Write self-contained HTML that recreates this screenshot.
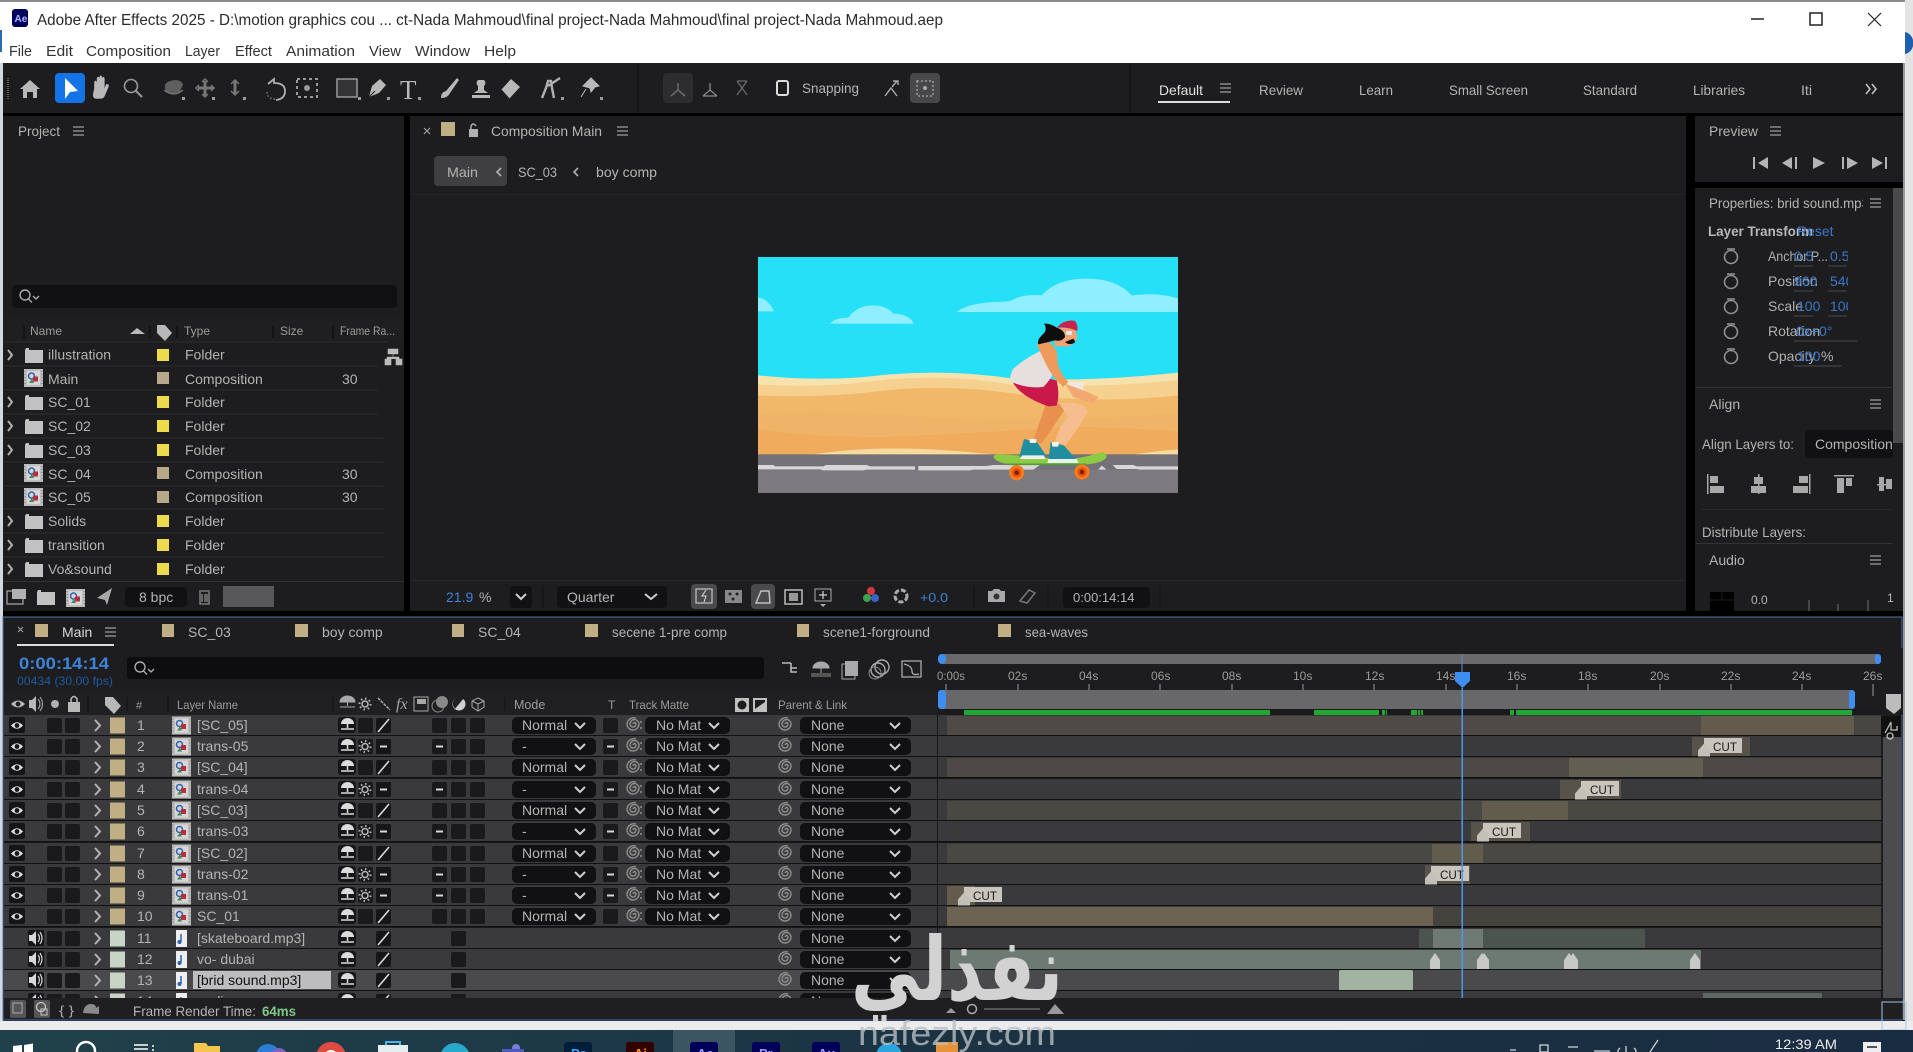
<!DOCTYPE html>
<html><head><meta charset="utf-8"><title>Adobe After Effects 2025</title>
<style>
html,body{margin:0;padding:0;background:#000;width:1913px;height:1052px;overflow:hidden}
svg{display:block}
text{font-family:"Liberation Sans","DejaVu Sans",sans-serif;font-size:14px;fill:#b4b4b4}
.t{font-size:16px;fill:#2a2a2a}
.m{font-size:15px;fill:#333}
.w{font-size:14px;fill:#a8a8a8}
.h{font-size:12px;fill:#9c9c9c}
.b{fill:#3b84d8}
.c{font-size:12px;fill:#1c1c1c;text-anchor:middle}
.g{fill:none;stroke:#b0b0b0;stroke-width:2}
.tk{stroke:#9a9a9a;stroke-width:1}
</style></head><body>
<svg width="1913" height="1052" viewBox="0 0 1913 1052" xmlns="http://www.w3.org/2000/svg">
<defs>
<clipPath id="clipRows"><rect x="0" y="691" width="1913" height="307"/></clipPath>
<clipPath id="clipScene"><rect x="54" y="50" width="1260" height="708"/></clipPath>
<clipPath id="clipTask"><rect x="0" y="1030" width="1913" height="22"/></clipPath>
<clipPath id="clipProp"><rect x="1700" y="190" width="163" height="30"/></clipPath>
<clipPath id="clipComp"><rect x="1805" y="430" width="88" height="30"/></clipPath>
<clipPath id="clipVal"><rect x="1790" y="245" width="58" height="80"/></clipPath>
<g id="ham"><path d="M0 0h11M0 4h11M0 8h11" stroke="#a0a0a0" stroke-width="1.3" fill="none"/></g>
<g id="ci"><rect width="19" height="18" fill="#bdbdbd"/><rect x="3" y="2" width="13" height="14" fill="#d6d6d6"/><circle cx="7.500" cy="7" r="3" fill="none" stroke="#2b62b5" stroke-width="1.500"/><rect x="9" y="7.500" width="5" height="5" fill="#b5303c"/><path d="M5 14l3-4 2 4z" fill="#3a8a5a"/><path d="M1 2v14M18 2v14" stroke="#777" stroke-dasharray="1 2"/></g>
<g id="fold"><path d="M0 3h4v-2h-3zM0 3h18v13h-18z" fill="#c2c2c2"/></g>
<g id="eye"><rect x="9" y="2" width="16" height="16" rx="2" fill="#151517"/><path d="M11 10.500q6-6.500 12 0q-6 6.500-12 0z" fill="#e4e4e4"/><circle cx="17" cy="10.500" r="2.400" fill="#151517"/></g>
<g id="spk"><rect x="28" y="2" width="16" height="16" rx="2" fill="#151517"/><path d="M29 7h3l4-4v14l-4-4h-3z" fill="#d8d8d8"/><path d="M38 6q3 4 0 8M40 4q4 6 0 12" stroke="#d0d0d0" stroke-width="1.200" fill="none"/></g>
<g id="shy"><rect x="338" y="2" width="18" height="16" rx="3" fill="#161618"/><path d="M341 9a6.500 6 0 0 1 13 0z" fill="#dcdcdc"/><path d="M347.500 9v4M341 14h13" stroke="#dcdcdc" stroke-width="1.500"/></g>
<g id="slash"><rect x="376" y="3" width="15" height="15" rx="2" fill="#161618"/><path d="M378 17l11-13" stroke="#d8d8d8" stroke-width="1.600"/></g>
<g id="spir"><path d="M0 -1a1.500 1.500 0 0 1 3 0a3 3 0 0 1-6 0a4.500 4.500 0 0 1 9 0a6 6 0 0 1-12 0a7 7 0 0 1 9-6" fill="none" stroke="#8e8e8e" stroke-width="1.400"/></g>
<g id="gear"><circle r="3" fill="none" stroke="#b8b8b8" stroke-width="1.500"/><circle r="5.500" fill="none" stroke="#b8b8b8" stroke-width="2" stroke-dasharray="1.500 2.800"/></g>
<g id="rowbase"><rect x="4" y="0" width="1877" height="21" fill="#3a3a3c"/><rect x="4" y="20" width="1877" height="1.400" fill="#111"/>
<rect x="47" y="3" width="15" height="15" rx="2" fill="#1a1a1c"/><rect x="65" y="3" width="15" height="15" rx="2" fill="#1a1a1c"/>
<path d="M95 5l5 5.500-5 5.500" fill="none" stroke="#b4b4b4" stroke-width="2"/>
<use href="#shy"/><use href="#slash"/>
<g transform="translate(785,10)"><use href="#spir"/></g>
<rect x="800" y="2" width="111" height="17" rx="5" fill="#111113"/><path d="M890 8l5 5 5-5" fill="none" stroke="#d0d0d0" stroke-width="2"/></g>
<g id="vis"><use href="#rowbase"/><use href="#eye"/><rect x="110" y="2.500" width="15" height="16" fill="#c0ae84"/><use href="#ci" x="172" y="1.500"/>
<rect x="432" y="3" width="15" height="15" rx="2" fill="#1a1a1c"/><rect x="451" y="3" width="15" height="15" rx="2" fill="#1a1a1c"/><rect x="470" y="3" width="15" height="15" rx="2" fill="#1a1a1c"/>
<rect x="512" y="2" width="84" height="17" rx="5" fill="#111113"/><path d="M575 8l5 5 5-5" fill="none" stroke="#d0d0d0" stroke-width="2"/>
<rect x="603" y="3" width="15" height="15" rx="2" fill="#1a1a1c"/>
<g transform="translate(633,10)"><use href="#spir"/></g><circle cx="641" cy="7" r="1" fill="#8e8e8e"/><circle cx="641" cy="13" r="1" fill="#8e8e8e"/>
<rect x="645" y="2" width="85" height="17" rx="5" fill="#111113"/><path d="M709 8l5 5 5-5" fill="none" stroke="#d0d0d0" stroke-width="2"/></g>
<g id="A"><use href="#vis"/><rect x="358" y="3" width="15" height="15" rx="2" fill="#1a1a1c"/></g>
<g id="B"><use href="#vis"/>
<rect x="358" y="3" width="15" height="15" rx="2" fill="#1a1a1c"/><g transform="translate(365,10.500)"><use href="#gear"/></g>
<rect x="376" y="3" width="15" height="15" rx="2" fill="#161618"/><path d="M380 10.500h7M436 10.500h7M607 10.500h7" stroke="#d8d8d8" stroke-width="2"/></g>
<g id="C"><use href="#rowbase"/><use href="#spk"/><rect x="110" y="2.500" width="15" height="16" fill="#c8d5c6"/><rect x="176" y="2" width="11" height="17" fill="#eee"/><path d="M181 6v8" stroke="#2b62b5" stroke-width="1.500"/><circle cx="179.500" cy="14" r="2" fill="#2b62b5"/>
<rect x="451" y="3" width="15" height="15" rx="2" fill="#1a1a1c"/></g>
<g id="cut"><rect x="0" y="2" width="38" height="15" fill="#c9c5bd"/><path d="M-6 20.500v-6l6-7 6 7v6z" fill="#c4c0b8"/><text class="c" x="21" y="15" textLength="24" lengthAdjust="spacingAndGlyphs">CUT</text></g>
<g id="mk"><path d="M-5 19v-9l5-7 5 7v9z" fill="#c8c8c8"/></g>
</defs>

<!-- window backdrop -->
<rect width="1913" height="1052" fill="#000"/>
<rect x="0" y="0" width="1905" height="63" fill="#fff"/>
<rect x="0" y="0" width="1905" height="2" fill="#8c8c8c"/>
<rect x="1905" y="0" width="8" height="1030" fill="#e4e4e4"/>
<path d="M1905 32a10 11 0 0 1 8 8v6a10 11 0 0 1-8 8z" fill="#1f5fae"/>
<rect x="0" y="63" width="3" height="967" fill="#d4d9df"/>
<path d="M0 30h2v22h-2z" fill="#2c6cb0"/>
<rect x="1903" y="63" width="2" height="957" fill="#9a9a9a"/>

<!-- title -->
<rect x="12" y="9" width="16" height="18" rx="3" fill="#00005b"/>
<text x="14.500" y="22" style="font-size:10px;fill:#b5b5ff;font-weight:bold">Ae</text>
<text class="t" x="37" y="25" textLength="906" lengthAdjust="spacingAndGlyphs">Adobe After Effects 2025 - D:\motion graphics cou ... ct-Nada Mahmoud\final project-Nada Mahmoud\final project-Nada Mahmoud.aep</text>
<path d="M1751 19h13" stroke="#222" stroke-width="1.500"/>
<rect x="1810" y="13" width="12" height="12" fill="none" stroke="#222" stroke-width="1.500"/>
<path d="M1868 13l13 13M1881 13l-13 13" stroke="#222" stroke-width="1.200"/>
<text class="m" x="9" y="56" textLength="23" lengthAdjust="spacingAndGlyphs">File</text>
<text class="m" x="46" y="56" textLength="27" lengthAdjust="spacingAndGlyphs">Edit</text>
<text class="m" x="86" y="56" textLength="85" lengthAdjust="spacingAndGlyphs">Composition</text>
<text class="m" x="185" y="56" textLength="35" lengthAdjust="spacingAndGlyphs">Layer</text>
<text class="m" x="235" y="56" textLength="37" lengthAdjust="spacingAndGlyphs">Effect</text>
<text class="m" x="286" y="56" textLength="69" lengthAdjust="spacingAndGlyphs">Animation</text>
<text class="m" x="369" y="56" textLength="32" lengthAdjust="spacingAndGlyphs">View</text>
<text class="m" x="415" y="56" textLength="55" lengthAdjust="spacingAndGlyphs">Window</text>
<text class="m" x="484" y="56" textLength="32" lengthAdjust="spacingAndGlyphs">Help</text>

<!-- toolbar -->
<rect x="3" y="63" width="1900" height="50" fill="#1d1d1f"/>
<path d="M638 64v49M1130 64v49" stroke="#101010"/>
<path d="M8 78v22" stroke="#5a5a5a" stroke-width="2" stroke-dasharray="1 1"/>
<path d="M20 89l10-9 10 9h-3v9h-4v-6h-6v6h-4v-9z" fill="#b8b8b8"/>
<rect x="55" y="73" width="30" height="30" rx="4" fill="#1473e6"/>
<path d="M65 78l13 13-8 1-5 7z" fill="#fff"/>
<path d="M94 88v-5q1-2 2 0v3v-6q1-2 2 0v5v-6q1-2 2 0v6v-5q1-2 2 0v8l1-3q3-1 2 2l-3 7q-1 2-4 2h-2q-3 0-3-3z" fill="#b8b8b8" transform="translate(-28,-26) scale(1.300)"/>
<circle cx="131" cy="86" r="6.500" fill="none" stroke="#999" stroke-width="1.600"/><path d="M136 91l6 6" stroke="#999" stroke-width="2"/>
<path d="M165 88q-1-5 5-7l5-1q7 0 8 5l-2 4q-1 5-8 5q-7 0-8-6z" fill="#5f5f5f"/><path d="M164 90q10 8 19 0" fill="none" stroke="#777" stroke-width="1.300"/>
<path d="M198 88h15M205 81v15" stroke="#777" stroke-width="3"/><path d="M202 82l3-3 3 3M202 94l3 3 3-3M199 85l-3 3 3 3M211 85l3 3-3 3" fill="none" stroke="#777" stroke-width="1.500"/>
<path d="M235 80v14" stroke="#777" stroke-width="3"/><path d="M231 84l4-4 4 4M231 91l4 4 4-4" fill="none" stroke="#777" stroke-width="1.500"/>
<path d="M268 84l6-5v4q11 0 11 8t-9 9" fill="none" stroke="#b0b0b0" stroke-width="1.800"/><path d="M275 99q-8 0-8-8" fill="none" stroke="#777" stroke-width="1.500" stroke-dasharray="1.500 2"/>
<rect x="297" y="79" width="20" height="18" fill="none" stroke="#9a9a9a" stroke-width="2" stroke-dasharray="3 3"/><circle cx="307" cy="88" r="3" fill="#9a9a9a"/>
<rect x="337" y="79" width="20" height="18" fill="#333336" stroke="#9a9a9a" stroke-width="1.500"/>
<path d="M369 97l3-11 8-7 6 6-7 8z" fill="#b8b8b8"/><path d="M369 97l6-6" stroke="#1d1d1f"/>
<text x="400" y="99" style="font-family:'Liberation Serif',serif;font-size:27px;fill:#b8b8b8">T</text>
<path d="M441 98q0-6 5-7l11-13 2 2-9 13q-2 5-9 5z" fill="#b8b8b8"/>
<path d="M472 98h18v-3h-18zM474 93h14l-4-3v-4q3-3 0-6h-6q-3 3 0 6v4z" fill="#b8b8b8"/>
<path d="M501 90l10-11 9 8-11 12z" fill="#b8b8b8"/><path d="M501 90l8 9" stroke="#1d1d1f" stroke-width="1.500"/>
<path d="M542 98l4-10 2-7 3 0 1 7 2 10M548 86l12-8" fill="none" stroke="#b0b0b0" stroke-width="2.400"/>
<path d="M583 86l8-8 8 8-4 1-4 5-1-4zM586 89l-5 8" fill="#b8b8b8" stroke="#b8b8b8"/>
<g fill="#9a9a9a"><path d="M182 97h3v3h-3zM212 97h3v3h-3zM243 97h3v3h-3zM358 97h3v3h-3zM387 97h3v3h-3zM418 97h3v3h-3zM561 97h3v3h-3zM600 97h3v3h-3z"/></g>
<rect x="663" y="73" width="30" height="30" rx="4" fill="#2d2d2f"/>
<path d="M678 83v7l-7 6M678 90l7 6" fill="none" stroke="#6a6a6a" stroke-width="1.500"/>
<path d="M710 83v7l-7 6M710 90l7 6M703 96h14" fill="none" stroke="#8a8a8a" stroke-width="1.300"/>
<path d="M737 81l10 14M747 81l-10 14M737 81h10" fill="none" stroke="#6a6a6a" stroke-width="1.300"/>
<rect x="777" y="81" width="11" height="14" rx="2" fill="none" stroke="#dcdcdc" stroke-width="2"/>
<text x="802" y="93" textLength="57" lengthAdjust="spacingAndGlyphs">Snapping</text>
<path d="M885 96l6-8 6 8M892 87l5-6M893 81h5v4" fill="none" stroke="#aaa" stroke-width="1.400"/>
<rect x="910" y="73" width="30" height="30" rx="4" fill="#48484a"/>
<rect x="917" y="81" width="16" height="15" fill="none" stroke="#aaa" stroke-width="1.300" stroke-dasharray="2 2"/><circle cx="925" cy="88" r="2" fill="#aaa"/>
<text x="1159" y="95" textLength="44" lengthAdjust="spacingAndGlyphs" style="fill:#e0e0e0">Default</text>
<use href="#ham" x="1220" y="84"/><rect x="1158" y="101" width="72" height="2" fill="#dcdcdc"/>
<text x="1259" y="95" textLength="44" lengthAdjust="spacingAndGlyphs">Review</text>
<text x="1359" y="95" textLength="34" lengthAdjust="spacingAndGlyphs">Learn</text>
<text x="1449" y="95" textLength="79" lengthAdjust="spacingAndGlyphs">Small Screen</text>
<text x="1583" y="95" textLength="54" lengthAdjust="spacingAndGlyphs">Standard</text>
<text x="1693" y="95" textLength="52" lengthAdjust="spacingAndGlyphs">Libraries</text>
<text x="1801" y="95" textLength="11" lengthAdjust="spacingAndGlyphs">Iti</text>
<path d="M1866 84l4 5-4 5M1872 84l4 5-4 5" fill="none" stroke="#c0c0c0" stroke-width="1.600"/>

<!-- project panel -->
<rect x="3" y="116" width="401" height="495" fill="#1d1d1f"/>
<text x="18" y="136" textLength="42" lengthAdjust="spacingAndGlyphs">Project</text><use href="#ham" x="73" y="127"/>
<rect x="12" y="285" width="385" height="23" rx="4" fill="#111113"/>
<circle cx="25" cy="295" r="5" fill="none" stroke="#aaa" stroke-width="1.400"/><path d="M28.500 299l3.500 3.500M33 296l3 3 3-3" fill="none" stroke="#aaa" stroke-width="1.400"/>
<rect x="3" y="318" width="401" height="24" fill="#1f1f21"/>
<text class="h" x="30" y="335">Name</text><path d="M130 334l7-6 8 6z" fill="#b8b8b8"/>
<path d="M157 325h8l7 8-7 8-8-8z" fill="#b8b8b8"/>
<text class="h" x="184" y="335">Type</text><text class="h" x="280" y="335">Size</text><text class="h" x="340" y="335" textLength="55" lengthAdjust="spacingAndGlyphs">Frame Ra...</text>
<path d="M24 326v12M150 326v12M177 326v12M273 326v12M333 326v12" stroke="#111" stroke-width="1.500"/>
<path d="M388 349h10v5h-10zM385 359h6v6h-6zM396 359h6v6h-6zM393 354v3M387 359v-2h12v2" fill="#bbb" stroke="#bbb" stroke-width=".6"/>
<g id="proj">
<g><path d="M8 350l4 5-4 5" class="g"/><use href="#fold" x="25" y="347"/><rect x="157" y="349" width="12" height="12" fill="#ecdc4c"/><text x="48" y="359.500">illustration</text><text x="185" y="359.500">Folder</text></g>
<g><use href="#ci" x="24" y="369"/><rect x="157" y="372" width="12" height="12" fill="#b8a88a"/><text x="48" y="384">Main</text><text x="185" y="384">Composition</text><text x="342" y="384">30</text></g>
<g><path d="M8 397l4 5-4 5" class="g"/><use href="#fold" x="25" y="394"/><rect x="157" y="396" width="12" height="12" fill="#ecdc4c"/><text x="48" y="407">SC_01</text><text x="185" y="407">Folder</text></g>
<g><path d="M8 421l4 5-4 5" class="g"/><use href="#fold" x="25" y="418"/><rect x="157" y="420" width="12" height="12" fill="#ecdc4c"/><text x="48" y="431">SC_02</text><text x="185" y="431">Folder</text></g>
<g><path d="M8 445l4 5-4 5" class="g"/><use href="#fold" x="25" y="442"/><rect x="157" y="444" width="12" height="12" fill="#ecdc4c"/><text x="48" y="455">SC_03</text><text x="185" y="455">Folder</text></g>
<g><use href="#ci" x="24" y="464"/><rect x="157" y="467" width="12" height="12" fill="#b8a88a"/><text x="48" y="479">SC_04</text><text x="185" y="479">Composition</text><text x="342" y="479">30</text></g>
<g><use href="#ci" x="24" y="488"/><rect x="157" y="491" width="12" height="12" fill="#b8a88a"/><text x="48" y="502">SC_05</text><text x="185" y="502">Composition</text><text x="342" y="502">30</text></g>
<g><path d="M8 516l4 5-4 5" class="g"/><use href="#fold" x="25" y="513"/><rect x="157" y="515" width="12" height="12" fill="#ecdc4c"/><text x="48" y="526">Solids</text><text x="185" y="526">Folder</text></g>
<g><path d="M8 540l4 5-4 5" class="g"/><use href="#fold" x="25" y="537"/><rect x="157" y="539" width="12" height="12" fill="#ecdc4c"/><text x="48" y="550">transition</text><text x="185" y="550">Folder</text></g>
<g><path d="M8 564l4 5-4 5" class="g"/><use href="#fold" x="25" y="561"/><rect x="157" y="563" width="12" height="12" fill="#ecdc4c"/><text x="48" y="574">Vo&amp;sound</text><text x="185" y="574">Folder</text></g>
</g>
<path d="M3 342h385M3 366h375M3 390h375M3 414h375M3 438h380M3 462h380M3 486h380M3 509h380M3 533h380M3 557h380" stroke="#2d2d2f"/>
<rect x="3" y="581" width="401" height="1" fill="#333"/>
<rect x="7" y="591" width="16" height="13" fill="none" stroke="#aaa" stroke-width="1.200"/><rect x="12" y="589" width="14" height="10" fill="#b0b0b0"/>
<use href="#fold" x="37" y="589"/><use href="#ci" x="66" y="589"/>
<path d="M97 598l15-10-5 17-2-5z" fill="#a8a8a8"/>
<rect x="125" y="587" width="62" height="20" rx="4" fill="#111113"/><text x="139" y="602">8 bpc</text>
<path d="M199 591h11M200 592v12h9v-12M202 594v8M205 594v8M207 594v8" fill="none" stroke="#8a8a8a" stroke-width="1.300"/>
<rect x="223" y="586" width="51" height="21" fill="#58585a"/>

<!-- composition panel -->
<rect x="410" y="116" width="1276" height="495" fill="#1d1d1f"/>
<path d="M424 128l6 6M430 128l-6 6" stroke="#a0a0a0" stroke-width="1.200"/>
<rect x="441" y="122" width="14" height="14" fill="#c0ae84"/>
<rect x="469" y="129" width="9" height="8" fill="#b0b0b0"/><path d="M471 129v-3q2-4 5 0" fill="none" stroke="#b0b0b0" stroke-width="1.400"/>
<text x="491" y="136" textLength="111" lengthAdjust="spacingAndGlyphs">Composition Main</text><use href="#ham" x="617" y="127"/>
<rect x="434" y="156" width="73" height="30" rx="4" fill="#3f3f41"/>
<text x="447" y="177" textLength="31" lengthAdjust="spacingAndGlyphs">Main</text>
<path d="M501 168l-4 4 4 4M578 168l-4 4 4 4" fill="none" stroke="#b0b0b0" stroke-width="1.600"/>
<text x="518" y="177" textLength="39" lengthAdjust="spacingAndGlyphs">SC_03</text>
<text x="596" y="177" textLength="61" lengthAdjust="spacingAndGlyphs">boy comp</text>
<rect x="410" y="194" width="1276" height="1" fill="#262628"/>

<!-- scene -->
<svg x="758" y="257" width="420" height="236" viewBox="54 50 1260 708">
<g clip-path="url(#clipScene)">
<rect x="54" y="50" width="1260" height="708" fill="#26e0f8"/>
<path d="M650 215Q680 190 760 185Q800 185 815 180Q850 160 905 165Q950 115 1040 115Q1130 115 1175 165Q1260 155 1314 175V215Z" fill="#8feeff"/>
<path d="M270 250Q285 232 325 232Q350 195 400 195Q440 195 460 220Q505 220 522 250Z" fill="#8feeff"/>
<path d="M54 172Q85 175 102 213H54Z" fill="#8feeff"/>
<path d="M54 405Q250 425 420 405Q620 385 820 415Q1050 425 1314 397V650H54Z" fill="#f7e2ad"/>
<path d="M54 432Q240 445 420 420Q620 400 810 432Q1050 445 1314 420V650H54Z" fill="#f5d08e"/>
<path d="M54 465Q240 475 440 450Q640 430 860 465Q1100 490 1314 465V650H54Z" fill="#f1b86a"/>
<path d="M54 520Q300 505 560 530Q800 550 1314 520V650H54Z" fill="#f0b468"/>
<path d="M54 565Q200 590 440 590Q760 575 1000 560Q1160 560 1314 575V650H54Z" fill="#f0ab5c"/>
<path d="M210 644Q440 605 770 644ZM1170 644Q1260 630 1314 628V644Z" fill="#f8d99e"/>
<rect x="54" y="642" width="1260" height="116" fill="#747278"/>
<rect x="54" y="688" width="1260" height="70" fill="#7c797f"/>
<path d="M54 674H100L105 678H250L258 674H380L390 678H525V688H380L370 690H250L240 687H54ZM535 677H740L760 674H900L880 688H700L690 690H535ZM1085 676L1100 688H1075ZM1118 674H1180L1190 678H1314V688H1200L1190 686H1130Z" fill="#d8d6d6"/>
<path d="M760 650Q760 640 790 642L950 654Q1010 660 1070 640Q1100 630 1100 650Q1090 668 1040 672L820 672Q770 670 760 650Z" fill="#8ecb45"/>
<path d="M800 672H1040" stroke="#4f9a3a" stroke-width="5"/>
<circle cx="830" cy="697" r="23" fill="#f47b20"/><circle cx="830" cy="697" r="14" fill="#e5540f"/><circle cx="830" cy="697" r="7" fill="#8a1d10"/>
<circle cx="1026" cy="695" r="23" fill="#f47b20"/><circle cx="1026" cy="695" r="14" fill="#e5540f"/><circle cx="1026" cy="695" r="7" fill="#8a1d10"/>
<path d="M918 490L880 600L905 610L985 492Z" fill="#e8914f"/>
<path d="M958 490Q1040 480 1042 515Q1020 560 975 615L945 605Q960 550 985 530Z" fill="#f6bd8f"/>
<path d="M852 596L892 606L918 645L850 655L838 648Z" fill="#1f8f9f"/><path d="M846 645H912L916 656H840Z" fill="#e8f0f0"/>
<path d="M932 605L972 616L1012 660L925 662Z" fill="#1f8f9f"/><path d="M925 656H1010L1016 668H922Z" fill="#e8f0f0"/>
<path d="M868 596h22l-2 12h-18zM935 605h22l-2 14h-18z" fill="#f4f4f4"/>
<path d="M812 412Q830 465 925 498L950 496Q960 465 950 420L905 410Z" fill="#c9184a"/>
<path d="M905 330Q860 350 820 385Q805 410 815 425Q860 445 910 440Q950 400 952 350Z" fill="#e6dfdc"/>
<path d="M890 310Q905 300 925 305Q950 320 952 345Q950 390 985 425L970 440Q935 410 915 365Q900 335 890 310Z" fill="#ee9a5c"/>
<path d="M985 425L1030 425L1030 450L985 445Z" fill="#efe7e2"/>
<path d="M975 430L1030 450L1075 470L1060 490L1000 470Z" fill="#f3a872"/>
<path d="M950 280Q940 300 945 318L985 318Q1005 312 1012 290L1005 265L960 262Z" fill="#f0a272"/>
<path d="M912 250Q930 248 950 262Q975 270 975 290Q965 305 945 300Q925 305 895 312Q890 300 905 285Q925 270 912 250Z" fill="#0e0e0e"/>
<path d="M950 262Q975 235 1005 242Q1015 255 1012 272Q980 258 950 262Z" fill="#c8234f"/>
<rect x="978" y="272" width="18" height="12" rx="3" fill="#e8e8f0"/><path d="M975 305Q990 318 1006 305L1000 295Z" fill="#0e0e0e"/>
</g></svg>

<!-- comp bottom bar -->
<rect x="410" y="580" width="1276" height="1" fill="#2a2a2c"/>
<text class="b" x="446" y="602">21.9</text><text x="479" y="602">%</text>
<rect x="510" y="586" width="22" height="22" rx="3" fill="#111113"/><path d="M516 594l5 5 5-5" fill="none" stroke="#d0d0d0" stroke-width="2"/>
<path d="M543 586v22" stroke="#111"/>
<rect x="557" y="586" width="110" height="22" rx="4" fill="#111113"/><text x="567" y="602">Quarter</text><path d="M645 594l6 5 6-5" fill="none" stroke="#d0d0d0" stroke-width="2"/>
<rect x="691" y="584" width="26" height="25" rx="4" fill="#4a4a4c"/><rect x="696" y="589" width="16" height="14" fill="none" stroke="#bbb" stroke-width="1.300"/><path d="M706 590l-4 6h4l-2 6" fill="none" stroke="#ddd"/>
<rect x="725" y="590" width="17" height="13" fill="#888"/><g fill="#222"><circle cx="730" cy="594" r="1.500"/><circle cx="737" cy="594" r="1.500"/><circle cx="733" cy="599" r="1.500"/></g>
<rect x="751" y="584" width="24" height="25" rx="4" fill="#4a4a4c"/><path d="M756 603h14l-1-12h-8z" fill="none" stroke="#c0c0c0" stroke-width="1.500"/>
<rect x="785" y="590" width="17" height="14" fill="none" stroke="#bbb" stroke-width="1.500"/><rect x="789" y="593" width="9" height="8" fill="#999"/>
<rect x="815" y="589" width="16" height="12" fill="none" stroke="#aaa"/><path d="M819 595h8M823 591v8" stroke="#ccc" stroke-width="1.300"/><path d="M820 604h6l-3 3z" fill="#aaa"/>
<circle cx="871" cy="591" r="4" fill="#d13a3a"/><circle cx="867" cy="598" r="4" fill="#3aa24a"/><circle cx="875" cy="598" r="4" fill="#3a64c8"/>
<circle cx="901" cy="596" r="6" fill="none" stroke="#aaa" stroke-width="3" stroke-dasharray="5 2"/>
<text class="b" x="920" y="602" textLength="28" lengthAdjust="spacingAndGlyphs" style="font-size:13px">+0.0</text>
<path d="M988 591h4l2-2h5l2 2h4v11h-17z" fill="#a8a8a8"/><circle cx="996.500" cy="596.500" r="3" fill="#333"/>
<path d="M1020 601l9-11 6 3-8 10z" fill="none" stroke="#777" stroke-width="1.500"/>
<rect x="1063" y="587" width="87" height="21" rx="4" fill="#111113"/><text x="1073" y="602" style="font-size:13px">0:00:14:14</text>
<path d="M974 586v22M1048 586v22M1160 586v22" stroke="#111"/>

<!-- right column -->
<rect x="1695" y="116" width="208" height="66" fill="#1d1d1f"/>
<rect x="1695" y="188" width="208" height="423" fill="#1d1d1f"/>
<rect x="1893" y="188" width="10" height="255" fill="#4a4a4c"/>
<text x="1709" y="136" textLength="49" lengthAdjust="spacingAndGlyphs">Preview</text><use href="#ham" x="1770" y="127"/>
<g fill="#b4b4b4"><path d="M1753 157h2v12h-2zM1768 157v12l-10-6zM1792 157v12l-10-6zM1795 157h2v12h-2zM1813 157l12 6-12 6zM1842 157h2v12h-2zM1847 157l11 6-11 6zM1872 157l11 6-11 6zM1885 157h2v12h-2z"/></g>
<g clip-path="url(#clipProp)"><text x="1709" y="208" textLength="160" lengthAdjust="spacingAndGlyphs">Properties: brid sound.mp3</text></g><use href="#ham" x="1870" y="199"/>
<text x="1708" y="236" style="font-size:13.500px;font-weight:bold;fill:#b8b8b8" textLength="105" lengthAdjust="spacingAndGlyphs">Layer Transform</text>
<text class="b" x="1797" y="236" style="fill:#3a78c8">Reset</text>
<g fill="none" stroke="#8f8f8f" stroke-width="1.600"><circle cx="1731" cy="257" r="6.500"/><path d="M1727 249h8"/><circle cx="1731" cy="282" r="6.500"/><path d="M1727 274h8"/><circle cx="1731" cy="307" r="6.500"/><path d="M1727 299h8"/><circle cx="1731" cy="332" r="6.500"/><path d="M1727 324h8"/><circle cx="1731" cy="357" r="6.500"/><path d="M1727 349h8"/></g>
<text x="1768" y="261" textLength="60" lengthAdjust="spacingAndGlyphs" style="fill:#b0b0b0">Anchor P...</text>
<text x="1768" y="286" style="fill:#b0b0b0">Position</text>
<text x="1768" y="311" style="fill:#b0b0b0">Scale</text>
<text x="1768" y="336" style="fill:#b0b0b0">Rotation</text>
<text x="1768" y="361" style="fill:#b0b0b0">Opacity</text>
<g clip-path="url(#clipVal)"><text x="1794" y="261" style="fill:#3a78c8">0.5</text><text x="1830" y="261" style="fill:#3a78c8">0.5</text><text x="1794" y="286" style="fill:#3a78c8">960</text><text x="1830" y="286" style="fill:#3a78c8">540</text><text x="1797" y="311" style="fill:#3a78c8">100</text><text x="1830" y="311" style="fill:#3a78c8">100</text></g>
<text x="1796" y="336" style="fill:#3a78c8">0x+0°</text><text x="1797" y="361" style="fill:#3a78c8">100</text>
<text x="1821" y="361">%</text>
<path d="M1794 266h19M1828 266h19M1794 291h19M1828 291h19M1794 316h19M1828 316h19M1794 341h63M1794 366h48" stroke="#4a4a4c"/>
<rect x="1696" y="387" width="196" height="1" fill="#333"/>
<text x="1709" y="409">Align</text><use href="#ham" x="1870" y="400"/>
<text x="1702" y="449" textLength="92" lengthAdjust="spacingAndGlyphs">Align Layers to:</text>
<rect x="1805" y="430" width="88" height="28" rx="3" fill="#111113"/><g clip-path="url(#clipComp)"><text x="1815" y="449">Composition</text></g>
<g fill="#a8a8a8"><path d="M1707 474h1.500v20h-1.500zM1710 476h8v7h-8zM1710 486h14v7h-14zM1758 474h1.500v20h-1.500zM1754 477h9v7h-9zM1751 486h15v7h-15zM1809 474h1.500v20h-1.500zM1799 476h9v7h-9zM1793 486h15v7h-15zM1834 475h20v1.500h-20zM1837 478h7v15h-7zM1846 478h6v8h-6zM1879 477h5v14h-5zM1886 479h6v10h-6zM1877 484h15v1.500h-15z"/></g>
<rect x="1702" y="509" width="190" height="1" fill="#2a2a2c"/>
<text x="1702" y="537" textLength="104" lengthAdjust="spacingAndGlyphs">Distribute Layers:</text>
<rect x="1696" y="543" width="196" height="1" fill="#333"/>
<text x="1709" y="565">Audio</text><use href="#ham" x="1870" y="556"/>
<rect x="1710" y="592" width="24" height="19" fill="#000"/><path d="M1722 592v8M1710 600h24" stroke="#1d1d1f"/>
<text x="1751" y="604" style="font-size:12px">0.0</text>
<path d="M1809 600v11M1838 604v7M1868 600v11" stroke="#555" stroke-width="1.500"/>
<text x="1887" y="602" style="font-size:12px">1</text>

<!-- timeline panel -->
<rect x="3" y="617" width="1899" height="403" fill="#1d1d1f" stroke="#4f76ad" stroke-width="1"/>
<path d="M17 627l5 5M22 627l-5 5" stroke="#a0a0a0" stroke-width="1.100" transform="translate(1 0)"/>
<rect x="35" y="624" width="13" height="13" fill="#c0ae84"/>
<text x="62" y="637" style="fill:#d8d8d8">Main</text><use href="#ham" x="105" y="628"/>
<rect x="17" y="644" width="97" height="2" fill="#dcdcdc"/>
<rect x="162" y="624" width="12" height="13" fill="#c0ae84"/><text x="188" y="637">SC_03</text>
<rect x="295" y="624" width="13" height="13" fill="#c0ae84"/><text x="322" y="637">boy comp</text>
<rect x="452" y="624" width="12" height="13" fill="#c0ae84"/><text x="478" y="637">SC_04</text>
<rect x="585" y="624" width="13" height="13" fill="#c0ae84"/><text x="612" y="637" textLength="115" lengthAdjust="spacingAndGlyphs">secene 1-pre comp</text>
<rect x="797" y="624" width="12" height="13" fill="#c0ae84"/><text x="823" y="637" textLength="107" lengthAdjust="spacingAndGlyphs">scene1-forground</text>
<rect x="998" y="624" width="13" height="13" fill="#c0ae84"/><text x="1025" y="637" textLength="63" lengthAdjust="spacingAndGlyphs">sea-waves</text>
<text x="19" y="669" textLength="90" lengthAdjust="spacingAndGlyphs" style="font-size:17px;font-weight:bold;fill:#3b84d8">0:00:14:14</text>
<text x="17" y="685" textLength="96" lengthAdjust="spacingAndGlyphs" style="font-size:12px;fill:#1e5aa0">00434 (30.00 fps)</text>
<rect x="127" y="657" width="637" height="22" rx="3" fill="#0d0d0f"/>
<circle cx="140" cy="667" r="5" fill="none" stroke="#aaa" stroke-width="1.400"/><path d="M143.500 671l3.500 3.500M148 669l3 3 3-3" fill="none" stroke="#aaa" stroke-width="1.400"/>
<path d="M782 663h9M791 663v9h6M791 668h6" fill="none" stroke="#b8b8b8" stroke-width="1.600"/><path d="M813 668a8 6 0 0 1 16 0zM821 668v6" fill="#a8a8a8" stroke="#a8a8a8"/><rect x="811" y="673" width="20" height="4" fill="#555"/>
<rect x="845" y="661" width="13" height="15" fill="#aaa"/><rect x="842" y="664" width="13" height="15" fill="none" stroke="#aaa"/>
<circle cx="882" cy="667" r="7" fill="none" stroke="#aaa" stroke-width="1.400"/><circle cx="878" cy="670" r="7" fill="none" stroke="#aaa" stroke-width="1.400"/><circle cx="875" cy="673" r="6" fill="none" stroke="#888"/>
<rect x="902" y="661" width="19" height="16" fill="none" stroke="#aaa" stroke-width="1.300"/><path d="M904 664q8 2 8 7t7 3" fill="none" stroke="#aaa" stroke-width="1.300"/>

<!-- column header -->
<rect x="4" y="691" width="933" height="24" fill="#202022"/>
<path d="M11 704q7-7 14 0q-7 7-14 0z" fill="#b8b8b8"/><circle cx="18" cy="704" r="2.400" fill="#202022"/>
<path d="M29 700h3l4-4v16l-4-4h-3z" fill="#b8b8b8"/><path d="M38 699q4 5 0 10M40 697q5 7 0 14" stroke="#b0b0b0" fill="none"/>
<circle cx="55" cy="704" r="4" fill="#b0b0b0"/>
<rect x="68" y="702" width="12" height="10" fill="#b8b8b8"/><path d="M71 702v-3q3-5 6 0v3" fill="none" stroke="#b8b8b8" stroke-width="1.600"/>
<path d="M105 697h8l8 9-7 8-9-9z" fill="#b8b8b8"/>
<text class="h" x="136" y="709" style="font-size:11px">#</text>
<text class="h" x="177" y="709" textLength="61" lengthAdjust="spacingAndGlyphs">Layer Name</text>
<path d="M340 702a7.500 6 0 0 1 15 0zM347.500 702v4M340 707h15" fill="#a8a8a8" stroke="#a8a8a8"/>
<g transform="translate(365,704)"><use href="#gear"/></g>
<path d="M378 698l12 12" stroke="#a8a8a8" stroke-width="1.500" stroke-dasharray="3 1"/>
<text x="396" y="709" style="font-family:'Liberation Serif',serif;font-style:italic;font-size:16px;fill:#a8a8a8">fx</text>
<rect x="414" y="697" width="14" height="14" fill="none" stroke="#a8a8a8"/><rect x="417" y="699" width="9" height="5" fill="#a8a8a8"/>
<circle cx="442" cy="702" r="6" fill="#8a8a8a"/><circle cx="438" cy="706" r="6" fill="none" stroke="#8a8a8a"/>
<circle cx="459" cy="704" r="6.500" fill="#d0d0d0"/><path d="M459 710a6.500 6.500 0 0 1 0-13z" fill="#202022" transform="rotate(40 459 704)"/>
<path d="M478 698l6 3v6l-6 4-6-4v-6zM472 701l6 3 6-3M478 704v7" fill="none" stroke="#a8a8a8"/>
<text class="h" x="514" y="709" style="font-size:12.500px">Mode</text><text class="h" x="608" y="709">T</text>
<text class="h" x="629" y="709" textLength="60" lengthAdjust="spacingAndGlyphs">Track Matte</text>
<rect x="735" y="698" width="14" height="14" fill="#c0c0c0"/><circle cx="742" cy="705" r="4.500" fill="#1d1d1f"/>
<rect x="753" y="698" width="14" height="14" fill="#c0c0c0"/><path d="M755 709l10-7v-2h-10z" fill="#1d1d1f"/>
<text class="h" x="778" y="709" textLength="69" lengthAdjust="spacingAndGlyphs">Parent &amp; Link</text>
<path d="M333 697v14M505 697v14M168 697v14M88 697v14M127 697v14" stroke="#111"/>

<!-- ruler -->
<rect x="937" y="648" width="966" height="67" fill="#1d1d1f"/>
<rect x="942" y="654" width="937" height="10" fill="#6a6a6d"/>
<rect x="938" y="654" width="8" height="10" rx="4" fill="#3d8ef0"/><rect x="1875" y="654" width="6" height="10" rx="3" fill="#3d8ef0"/>
<g style="font-size:12px">
<text class="h" x="937" y="680" textLength="28" lengthAdjust="spacingAndGlyphs">0:00s</text>
<text class="h" x="1008" y="680">02s</text><text class="h" x="1079" y="680">04s</text><text class="h" x="1151" y="680">06s</text><text class="h" x="1222" y="680">08s</text><text class="h" x="1293" y="680">10s</text><text class="h" x="1365" y="680">12s</text><text class="h" x="1436" y="680">14s</text><text class="h" x="1507" y="680">16s</text><text class="h" x="1578" y="680">18s</text><text class="h" x="1650" y="680">20s</text><text class="h" x="1721" y="680">22s</text><text class="h" x="1792" y="680">24s</text><text class="h" x="1863" y="680">26s</text>
</g>
<path class="tk" d="M946 684v6M1018 684v6M1089 684v6M1160 684v6M1232 684v6M1303 684v6M1374 684v6M1446 684v6M1517 684v6M1588 684v6M1660 684v6M1731 684v6M1802 684v6M1873 684v12"/>
<rect x="942" y="690" width="910" height="19" fill="#68686b"/>
<rect x="938" y="690" width="8" height="19" rx="3" fill="#3d8ef0"/><rect x="1849" y="690" width="6" height="19" rx="3" fill="#3d8ef0"/>
<rect x="942" y="709" width="939" height="6" fill="#1a1a1c"/>
<path d="M964 710h306v5h-306zM1314 710h65v5h-65zM1382 710h3v5h-3zM1386 710h1v5h-1zM1411 710h6v5h-6zM1418 710h2v5h-2zM1421 710h2v5h-2zM1510 710h4v5h-4zM1516 710h336v5h-336z" fill="#20a832"/>
<path d="M1886 694h15v14l-7 6-8-6z" fill="#bcbcbc"/>

<!-- rows -->
<g clip-path="url(#clipRows)">
<g transform="translate(0,715)"><use href="#A"/><text x="137" y="15">1</text><text x="197" y="15">[SC_05]</text><text x="522" y="15">Normal</text><text x="656" y="15">No Mat</text><text x="811" y="15">None</text></g>
<g transform="translate(0,736)"><use href="#B"/><text x="137" y="15">2</text><text x="197" y="15">trans-05</text><text x="522" y="15">-</text><text x="656" y="15">No Mat</text><text x="811" y="15">None</text></g>
<g transform="translate(0,757)"><use href="#A"/><text x="137" y="15">3</text><text x="197" y="15">[SC_04]</text><text x="522" y="15">Normal</text><text x="656" y="15">No Mat</text><text x="811" y="15">None</text></g>
<g transform="translate(0,779)"><use href="#B"/><text x="137" y="15">4</text><text x="197" y="15">trans-04</text><text x="522" y="15">-</text><text x="656" y="15">No Mat</text><text x="811" y="15">None</text></g>
<g transform="translate(0,800)"><use href="#A"/><text x="137" y="15">5</text><text x="197" y="15">[SC_03]</text><text x="522" y="15">Normal</text><text x="656" y="15">No Mat</text><text x="811" y="15">None</text></g>
<g transform="translate(0,821)"><use href="#B"/><text x="137" y="15">6</text><text x="197" y="15">trans-03</text><text x="522" y="15">-</text><text x="656" y="15">No Mat</text><text x="811" y="15">None</text></g>
<g transform="translate(0,843)"><use href="#A"/><text x="137" y="15">7</text><text x="197" y="15">[SC_02]</text><text x="522" y="15">Normal</text><text x="656" y="15">No Mat</text><text x="811" y="15">None</text></g>
<g transform="translate(0,864)"><use href="#B"/><text x="137" y="15">8</text><text x="197" y="15">trans-02</text><text x="522" y="15">-</text><text x="656" y="15">No Mat</text><text x="811" y="15">None</text></g>
<g transform="translate(0,885)"><use href="#B"/><text x="137" y="15">9</text><text x="197" y="15">trans-01</text><text x="522" y="15">-</text><text x="656" y="15">No Mat</text><text x="811" y="15">None</text></g>
<g transform="translate(0,906)"><use href="#A"/><text x="137" y="15">10</text><text x="197" y="15">SC_01</text><text x="522" y="15">Normal</text><text x="656" y="15">No Mat</text><text x="811" y="15">None</text></g>
<g transform="translate(0,928)"><use href="#C"/><text x="137" y="15">11</text><text x="197" y="15">[skateboard.mp3]</text><text x="811" y="15">None</text></g>
<g transform="translate(0,949)"><use href="#C"/><text x="137" y="15">12</text><text x="197" y="15">vo- dubai</text><text x="811" y="15">None</text></g>
<g transform="translate(0,970)"><rect x="4" y="0" width="1877" height="21" fill="#4a4a4c"/><rect x="4" y="20" width="1877" height="1.400" fill="#111"/></g>
<g transform="translate(0,970)"><rect x="47" y="3" width="15" height="15" rx="2" fill="#1a1a1c"/><rect x="65" y="3" width="15" height="15" rx="2" fill="#1a1a1c"/><path d="M95 5l5 5.500-5 5.500" fill="none" stroke="#b4b4b4" stroke-width="2"/><use href="#spk"/><rect x="110" y="2.500" width="15" height="16" fill="#c8d5c6"/><rect x="176" y="2" width="11" height="17" fill="#eee"/><path d="M181 6v8" stroke="#2b62b5" stroke-width="1.500"/><circle cx="179.500" cy="14" r="2" fill="#2b62b5"/><rect x="193" y="1" width="138" height="18" fill="#bdbdbf"/><use href="#shy"/><use href="#slash"/><rect x="451" y="3" width="15" height="15" rx="2" fill="#1a1a1c"/><g transform="translate(785,10)"><use href="#spir"/></g><rect x="800" y="2" width="111" height="17" rx="5" fill="#111113"/><path d="M890 8l5 5 5-5" fill="none" stroke="#d0d0d0" stroke-width="2"/><text x="137" y="15">13</text><text x="197" y="15" style="fill:#111">[brid sound.mp3]</text><text x="811" y="15">None</text></g>
<g transform="translate(0,991)"><use href="#C"/><text x="137" y="15">14</text><text x="197" y="15">audio</text><text x="811" y="15">None</text></g>
</g>
<!-- track area -->
<rect x="937" y="715" width="1" height="283" fill="#141416"/>
<g>
<rect x="947" y="716" width="907" height="19" fill="#4f4a45"/><rect x="1854" y="716" width="27" height="19" fill="#47453f"/><rect x="1701" y="716" width="153" height="19" fill="#635c4c"/>
<rect x="947" y="758" width="934" height="19" fill="#4d4945"/><rect x="1569" y="758" width="134" height="19" fill="#635f50"/>
<rect x="947" y="801" width="934" height="19" fill="#494842"/><rect x="1482" y="801" width="86" height="19" fill="#625c4d"/>
<rect x="947" y="844" width="934" height="19" fill="#494842"/><rect x="1432" y="844" width="51" height="19" fill="#625c4d"/>
<rect x="1692" y="737" width="58" height="19" fill="#57534b"/><use href="#cut" x="1704" y="736"/>
<rect x="1560" y="780" width="61" height="19" fill="#57534b"/><use href="#cut" x="1581" y="779"/>
<rect x="1471" y="822" width="59" height="19" fill="#57534b"/><use href="#cut" x="1483" y="821"/>
<rect x="1425" y="865" width="45" height="19" fill="#57534b"/><use href="#cut" x="1431" y="864"/>
<rect x="947" y="886" width="28" height="19" fill="#635c4c"/><use href="#cut" x="964" y="885"/>
<rect x="947" y="907" width="934" height="19" fill="#45433d"/><rect x="947" y="907" width="486" height="19" fill="#6c6353"/>
<rect x="1419" y="929" width="226" height="19" fill="#4c5450"/><rect x="1433" y="929" width="50" height="19" fill="#6f7a75"/>
<rect x="950" y="950" width="751" height="19" fill="#6d7a73"/>
<use href="#mk" x="1435" y="950"/><use href="#mk" x="1482" y="950"/><use href="#mk" x="1484" y="950"/><use href="#mk" x="1569" y="950"/><use href="#mk" x="1573" y="950"/><use href="#mk" x="1695" y="950"/>
<path d="M1339 990v-18q0-2 2-2h70q2 0 2 2v18z" fill="#a3b3a1"/>
<path d="M1703 998v-5h119v5z" fill="#5e6761"/>
</g>
<rect x="1883" y="716" width="18" height="282" fill="#4c4c4e"/>
<rect x="1881" y="716" width="20" height="21" fill="#111"/><path d="M1885 733l6-11v8h6v-4M1890 733a3 3 0 1 0 .1 0" fill="none" stroke="#bbb" stroke-width="1.300"/>

<!-- playhead -->
<rect x="1461.500" y="655" width="1" height="17" fill="#6b8fc0"/>
<rect x="1461.500" y="688" width="1.500" height="310" fill="#4f97ee"/>
<path d="M1455 672h15v9l-7.500 7-7.500-7z" fill="#3d8ef0"/>

<!-- status bar -->
<rect x="4" y="998" width="1898" height="21" fill="#1f1f21"/>
<rect x="10" y="1000" width="16" height="18" rx="2" fill="#555"/><rect x="13" y="1003" width="9" height="10" fill="none" stroke="#aaa"/>
<rect x="34" y="1000" width="16" height="18" rx="2" fill="#555"/><circle cx="41" cy="1007" r="4.500" fill="none" stroke="#c8c8c8" stroke-width="1.300"/><rect x="41" y="1009" width="6" height="6" fill="none" stroke="#c8c8c8"/>
<text x="59" y="1015" textLength="15" lengthAdjust="spacingAndGlyphs" style="fill:#aaa;font-size:13px">{ }</text>
<path d="M83 1013q1-9 8-9q5 0 5 4l3-2v8z" fill="#8a8a8a"/>
<text x="133" y="1016" textLength="123" lengthAdjust="spacingAndGlyphs" style="font-size:14px">Frame Render Time:</text>
<text x="262" y="1016" textLength="34" lengthAdjust="spacingAndGlyphs" style="font-weight:bold;fill:#7ec98a">64ms</text>
<path d="M946 1013l5-5 5 5z" fill="#999"/><circle cx="972" cy="1009" r="4.500" fill="none" stroke="#aaa" stroke-width="1.500"/><rect x="984" y="1008" width="56" height="2" fill="#555"/><path d="M1047 1014l8-10 9 10z" fill="#999"/>

<!-- lower strip + taskbar -->
<rect x="0" y="1021" width="1913" height="9" fill="#ececec"/>
<rect x="1882" y="1002" width="24" height="28" fill="none" stroke="#a6c6e8"/>
<defs><linearGradient id="tb" x1="0" x2="1" y1="0" y2="0"><stop offset="0" stop-color="#20414b"/><stop offset=".5" stop-color="#1b3343"/><stop offset="1" stop-color="#1a2c42"/></linearGradient></defs>
<rect x="0" y="1030" width="1913" height="22" fill="url(#tb)"/>
<rect x="673" y="1030" width="62" height="22" fill="#3c5563"/>
<g clip-path="url(#clipTask)">
<path d="M13 1046l9-1v8h-9zM24 1045l9-1.500v10h-9z" fill="#fff"/>
<circle cx="86" cy="1051" r="9" fill="none" stroke="#fff" stroke-width="2.500"/>
<path d="M134 1045h14M134 1049h14M134 1053h14M152 1046h2M152 1050h2" stroke="#fff" stroke-width="1.400"/>
<path d="M194 1046v-3h12l2 3h12v8h-26z" fill="#f4c64e"/>
<circle cx="268" cy="1056" r="12" fill="#2b7ed4"/><circle cx="279" cy="1056" r="8" fill="#8060c8"/>
<circle cx="331" cy="1057" r="15" fill="#e04b3f"/><circle cx="331" cy="1057" r="6" fill="#3b82e6" stroke="#fff" stroke-width="2"/>
<rect x="378" y="1045" width="30" height="9" fill="#e6eef2"/><path d="M386 1045v-3h14v3" fill="none" stroke="#4fb2e6" stroke-width="2"/>
<circle cx="455" cy="1058" r="15" fill="#28a8cc"/>
<circle cx="516" cy="1048" r="4" fill="#7a80d8"/><rect x="502" y="1049" width="22" height="8" fill="#4f5ac0"/>
<rect x="564" y="1042" width="28" height="12" rx="3" fill="#001d3a"/><text x="571" y="1058" style="font-size:13px;font-weight:bold;fill:#31a8ff">Ps</text>
<rect x="626" y="1042" width="28" height="12" rx="3" fill="#330000"/><text x="634" y="1058" style="font-size:13px;font-weight:bold;fill:#ff9a00">Ai</text>
<rect x="690" y="1042" width="28" height="12" rx="3" fill="#00005b"/><text x="697" y="1058" style="font-size:13px;font-weight:bold;fill:#9999ff">Ae</text>
<rect x="752" y="1042" width="28" height="12" rx="3" fill="#00005b"/><text x="759" y="1058" style="font-size:13px;font-weight:bold;fill:#9999ff">Pr</text>
<rect x="812" y="1042" width="28" height="12" rx="3" fill="#00005b"/><text x="818" y="1058" style="font-size:13px;font-weight:bold;fill:#9999ff">Au</text>
<circle cx="889" cy="1056" r="13" fill="#2aa5e0"/>
<rect x="936" y="1042" width="22" height="14" fill="#e8923a"/>
</g>
<path d="M1510 1050h6M1540 1045h8v7h-8zM1568 1047h10M1594 1051h16M1620 1048q-4 3 0 6M1626 1046v8M1634 1048q4 3 0 6M1650 1052l8-12" fill="none" stroke="#cfd6da" stroke-width="1.300"/>
<text x="1775" y="1049" textLength="62" lengthAdjust="spacingAndGlyphs" style="fill:#eee;font-size:14px">12:39 AM</text>
<rect x="1863" y="1042" width="18" height="10" fill="#eee"/><path d="M1867 1047h10" stroke="#222" stroke-width="1.500"/>

<!-- watermark -->
<text x="1063" y="1000" textLength="212" lengthAdjust="spacingAndGlyphs" direction="rtl" style="font-family:'DejaVu Sans',sans-serif;font-weight:bold;font-size:88px;fill:#d2d2d2;direction:rtl">نفذلي</text>
<text x="858" y="1045" textLength="198" lengthAdjust="spacingAndGlyphs" style="font-size:34px;fill:#b8bec2;opacity:.8">nafezly.com</text>
</svg>
</body></html>
